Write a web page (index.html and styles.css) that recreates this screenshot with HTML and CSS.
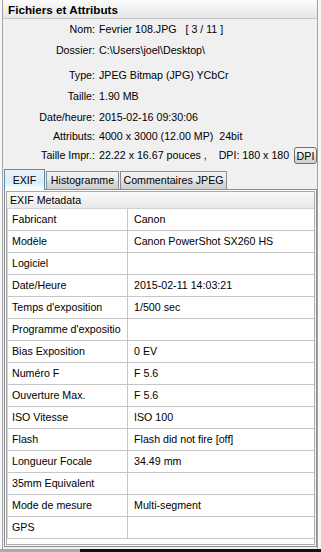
FILE: index.html
```html
<!DOCTYPE html>
<html lang="fr">
<head>
    <meta charset="UTF-8">
    <title>Fichiers et Attributs</title>
    <link rel="stylesheet" href="styles.css">
</head>
<body>
    <div class="window">
        <div class="title">Fichiers et Attributs</div>

        <div class="info">
            <div class="info-row"><span class="label">Nom:</span><span class="value">Fevrier 108.JPG   [ 3 / 11 ]</span></div>
            <div class="info-row gap-s"><span class="label">Dossier:</span><span class="value">C:\Users\joel\Desktop\</span></div>
            <div class="info-row gap-l"><span class="label">Type:</span><span class="value">JPEG Bitmap (JPG) YCbCr</span></div>
            <div class="info-row gap-s"><span class="label">Taille:</span><span class="value">1.90 MB</span></div>
            <div class="info-row gap-s"><span class="label">Date/heure:</span><span class="value">2015-02-16 09:30:06</span></div>
            <div class="info-row"><span class="label">Attributs:</span><span class="value">4000 x 3000 (12.00 MP)  24bit</span></div>
            <div class="info-row"><span class="label">Taille Impr.:</span><span class="value value-flex"><span>22.22 x 16.67 pouces ,    DPI: 180 x 180</span><button class="dpi">DPI</button></span></div>
        </div>

        <div class="tabs">
            <div class="tab tab-exif selected">EXIF</div>
            <div class="tab tab-histo">Histogramme</div>
            <div class="tab tab-comment">Commentaires JPEG</div>
        </div>

        <div class="panel">
            <div class="pane">
                <div class="meta-head">EXIF Metadata</div>
                <div id="exif-rows"></div>
            </div>
        </div>
    </div>
    <div class="taskbar">
        <span class="taskbar-left"></span>
        <span class="taskbar-right"></span>
    </div>

    <script>
        const exif = [
            ['Fabricant', 'Canon'],
            ['Modèle', 'Canon PowerShot SX260 HS'],
            ['Logiciel', ''],
            ['Date/Heure', '2015-02-11 14:03:21'],
            ["Temps d'exposition", '1/500 sec'],
            ["Programme d'expositio", ''],
            ['Bias Exposition', '0 EV'],
            ['Numéro F', 'F 5.6'],
            ['Ouverture Max.', 'F 5.6'],
            ['ISO Vitesse', 'ISO 100'],
            ['Flash', 'Flash did not fire [off]'],
            ['Longueur Focale', '34.49 mm'],
            ['35mm Equivalent', ''],
            ['Mode de mesure', 'Multi-segment'],
            ['GPS', '']
        ];

        const rows = document.getElementById('exif-rows');
        exif.forEach(item => {
            const row = document.createElement('div');
            row.className = 'exif-row';
            row.innerHTML = `<span class="cell key">${item[0]}</span><span class="cell val">${item[1]}</span>`;
            rows.appendChild(row);
        });
    </script>
</body>
</html>
```

FILE: styles.css
```css
body {
    margin: 0;
    width: 321px;
    height: 552px;
    overflow: hidden;
    background: #f7f7f7;
    font-family: "Liberation Sans", Arial, sans-serif;
    font-size: 10.67px;
    color: #000;
}
.window {
    margin-left: 2px;
    width: 316px;
    height: 549px;
    box-sizing: border-box;
    border-left: 1px solid #a3a3a3;
    border-right: 1px solid #a3a3a3;
    background: #f0f0f0;
}
.title {
    height: 18px;
    line-height: 19px;
    padding-left: 5px;
    font-size: 11.7px;
    font-weight: bold;
    background: linear-gradient(#fbfbfb, #e6e6e6);
    border-bottom: 1px solid #c4c4c4;
}
.info {
    padding-top: 1px;
}
.info-row {
    display: grid;
    grid-template-columns: 92px 1fr;
    column-gap: 4px;
    height: 19px;
    line-height: 19px;
}
.gap-s {
    margin-top: 2px;
}
.gap-l {
    margin-top: 6px;
}
.label {
    text-align: right;
}
.value {
    white-space: pre;
}
.value-flex {
    display: flex;
    align-items: center;
}
.dpi {
    margin-left: auto;
    width: 23px;
    height: 17px;
    padding: 0;
    font-family: "Liberation Sans", Arial, sans-serif;
    font-size: 10.67px;
    color: #000;
    border: 1px solid #707070;
    border-radius: 3px;
    background: linear-gradient(#f4f4f4 0%, #ebebeb 50%, #dddddd 51%, #cfcfcf 100%);
}
.tabs {
    display: flex;
    align-items: flex-end;
    margin-top: 4px;
    height: 20px;
}
.tab {
    box-sizing: border-box;
    height: 18px;
    margin-left: 1px;
    line-height: 17px;
    text-align: center;
    border: 1px solid #898c95;
    border-bottom: none;
    background: linear-gradient(#f2f2f2 0%, #ebebeb 50%, #dddddd 51%, #cfcfcf 100%);
}
.tab.selected {
    position: relative;
    z-index: 1;
    height: 21px;
    margin-bottom: -1px;
    line-height: 20px;
    border-color: #5b8ab5;
    background: linear-gradient(#eaf5fc, #d9ecf8 60%, #fcfcfc 95%);
}
.tab-exif {
    width: 41px;
}
.tab-histo {
    width: 73px;
}
.tab-comment {
    width: 107px;
}
.panel {
    margin-left: 1px;
    width: 313px;
    box-sizing: border-box;
    border: 1px solid #898c95;
    padding: 1px;
    background: #fcfcfc;
}
.pane {
    height: 352px;
    overflow: hidden;
    border: 1px solid #a9a9a9;
    background: #fff;
}
.meta-head {
    height: 16px;
    line-height: 16px;
    padding-left: 3px;
    background: linear-gradient(#fafafa, #e9e9e9);
    border-bottom: 1px solid #d2d2d2;
}
.exif-row {
    display: grid;
    grid-template-columns: 120px 1fr;
    height: 21px;
    border-bottom: 1px solid #c6c6c6;
    border-left: 1px solid #d4d4d4;
}
.cell {
    line-height: 21px;
    white-space: nowrap;
    overflow: hidden;
}
.key {
    padding-left: 4px;
    border-right: 1px solid #c6c6c6;
}
.val {
    padding-left: 6px;
}
.taskbar {
    display: flex;
    height: 3px;
}
.taskbar-left {
    width: 80px;
    background: #a9a9a9;
}
.taskbar-right {
    flex: 1;
    background: #111;
}
```
